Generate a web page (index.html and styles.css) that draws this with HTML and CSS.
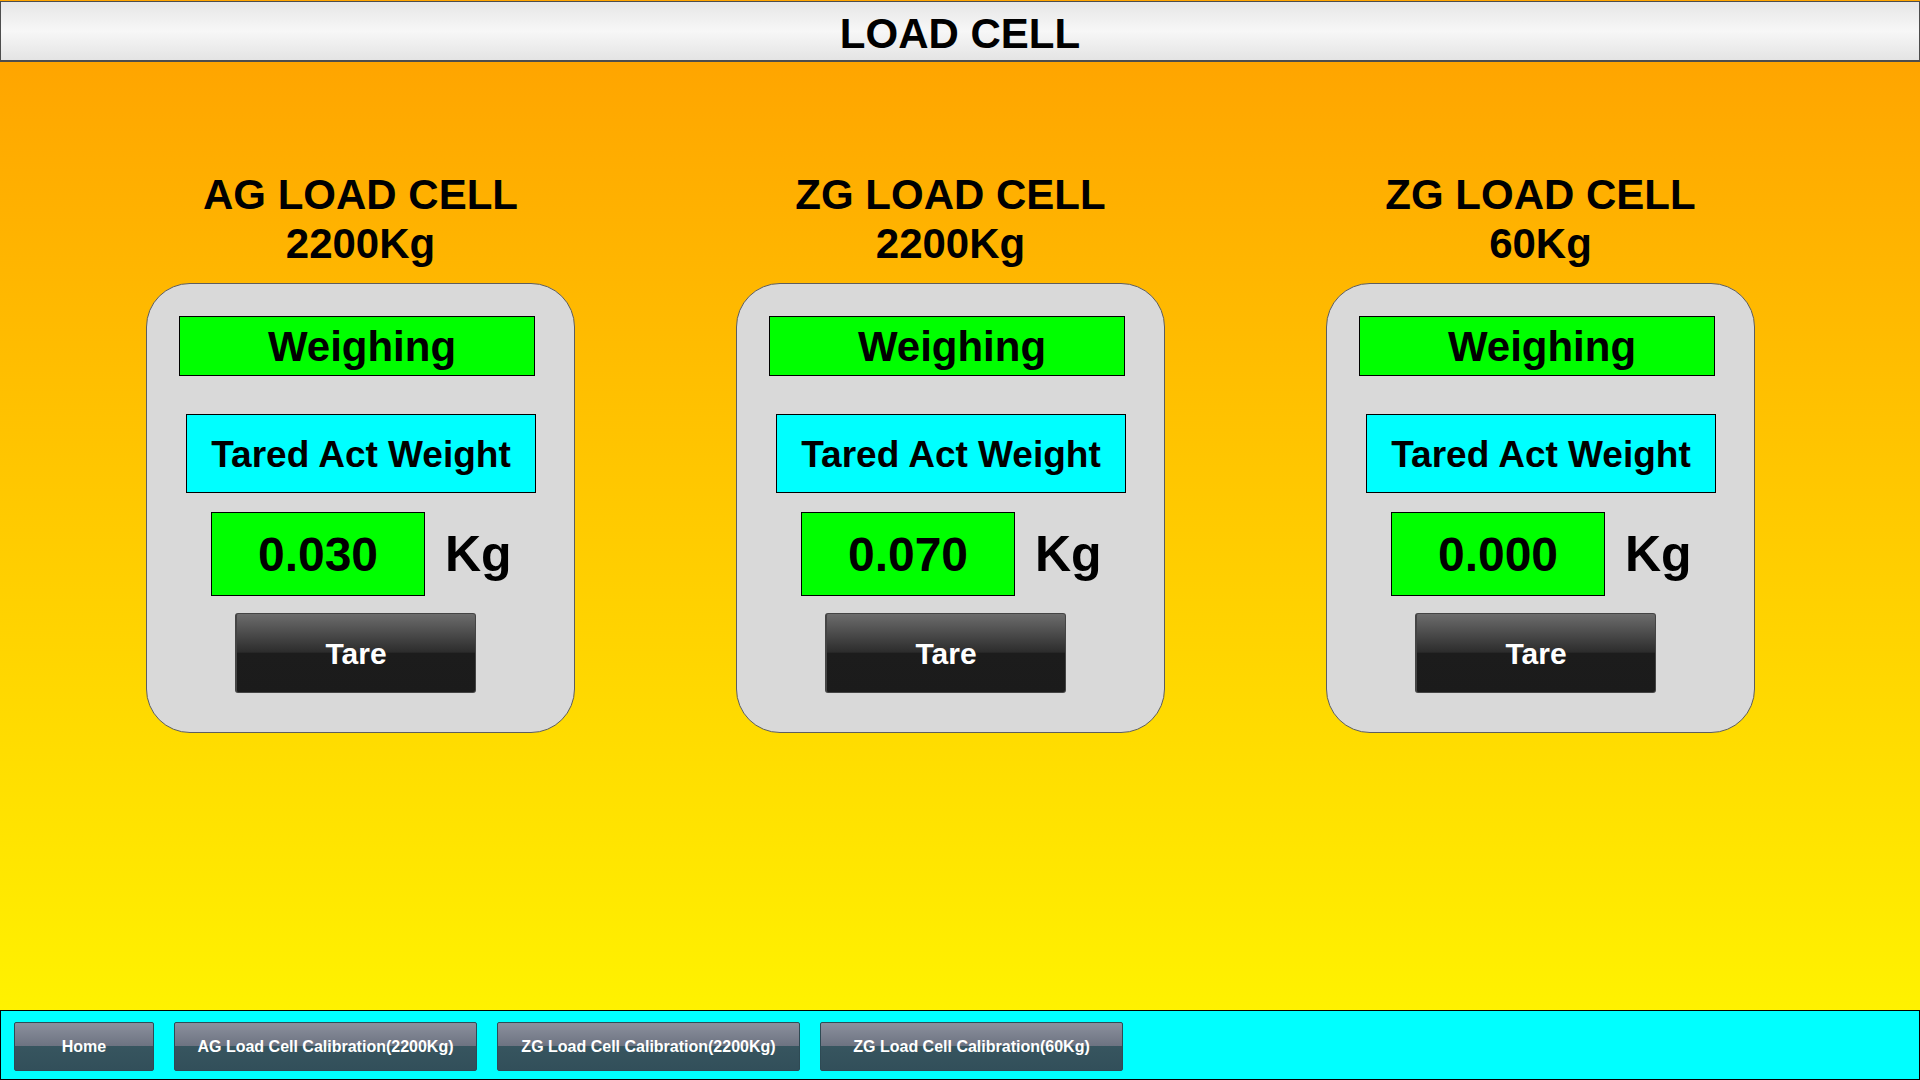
FILE: index.html
```html
<!DOCTYPE html>
<html>
<head>
<meta charset="utf-8">
<title>LOAD CELL</title>
<link rel="stylesheet" href="styles.css">
</head>
<body>
<div class="screen">
  <header class="topbar"><h1 class="topbar-title">LOAD CELL</h1></header>
  <main class="cells">
    <section class="cell">
      <h2 class="cell-title">AG LOAD CELL<br>2200Kg</h2>
      <div class="card">
        <div class="status">Weighing</div>
        <div class="label">Tared Act Weight</div>
        <div class="reading">
          <div class="value">0.030</div>
          <div class="unit">Kg</div>
        </div>
        <button class="tare">Tare</button>
      </div>
    </section>
    <section class="cell">
      <h2 class="cell-title">ZG LOAD CELL<br>2200Kg</h2>
      <div class="card">
        <div class="status">Weighing</div>
        <div class="label">Tared Act Weight</div>
        <div class="reading">
          <div class="value">0.070</div>
          <div class="unit">Kg</div>
        </div>
        <button class="tare">Tare</button>
      </div>
    </section>
    <section class="cell">
      <h2 class="cell-title">ZG LOAD CELL<br>60Kg</h2>
      <div class="card">
        <div class="status">Weighing</div>
        <div class="label">Tared Act Weight</div>
        <div class="reading">
          <div class="value">0.000</div>
          <div class="unit">Kg</div>
        </div>
        <button class="tare">Tare</button>
      </div>
    </section>
  </main>
  <footer class="navbar">
    <button class="nav-btn nav-home">Home</button>
    <button class="nav-btn">AG Load Cell Calibration(2200Kg)</button>
    <button class="nav-btn">ZG Load Cell Calibration(2200Kg)</button>
    <button class="nav-btn">ZG Load Cell Calibration(60Kg)</button>
  </footer>
</div>
</body>
</html>
```

FILE: styles.css
```css
* { box-sizing: border-box; }
html, body { margin: 0; padding: 0; }
body {
  font-family: "Liberation Sans", Arial, sans-serif;
  width: 1920px;
  height: 1080px;
  overflow: hidden;
}
.screen {
  width: 1920px;
  height: 1080px;
  display: flex;
  flex-direction: column;
  background: linear-gradient(to bottom, #ffa500 0px, #ffa500 61px, #fff200 1010px);
}
.topbar {
  margin-top: 1px;
  height: 61px;
  border: 1px solid #4d4d4d;
  border-bottom-width: 2px;
  background: linear-gradient(to bottom, #e6e6e6 0%, #f7f7f7 50%, #e4e4e4 100%);
  display: flex;
  align-items: center;
  justify-content: center;
}
.topbar-title {
  margin: 0;
  font-size: 42px;
  font-weight: bold;
  color: #000;
  line-height: 1;
  padding-top: 6px;
}
.cells {
  flex: 1;
  display: flex;
  gap: 161px;
  padding-left: 146px;
  padding-top: 108px;
}
.cell {
  width: 429px;
  display: flex;
  flex-direction: column;
  align-items: center;
}
.cell-title {
  margin: 0;
  font-size: 42px;
  line-height: 49px;
  font-weight: bold;
  text-align: center;
  color: #000;
}
.card {
  margin-top: 15px;
  width: 429px;
  height: 450px;
  border: 1px solid #5e5e5e;
  border-radius: 44px;
  background: #d9d9d9;
  display: flex;
  flex-direction: column;
  align-items: flex-start;
}
.status {
  margin-top: 32px;
  margin-left: 32px;
  width: 356px;
  height: 60px;
  border: 1px solid #000;
  background: #00ff00;
  display: flex;
  align-items: center;
  justify-content: center;
  padding-left: 10px;
  padding-top: 2px;
  font-size: 42px;
  font-weight: bold;
  color: #000;
}
.label {
  margin-top: 38px;
  margin-left: 39px;
  width: 350px;
  height: 79px;
  border: 1px solid #000;
  background: #00ffff;
  display: flex;
  align-items: center;
  justify-content: center;
  padding-top: 2px;
  font-size: 37px;
  font-weight: bold;
  color: #000;
}
.reading {
  margin-top: 19px;
  margin-left: 64px;
  display: flex;
  align-items: center;
  gap: 20px;
}
.value {
  width: 214px;
  height: 84px;
  border: 1px solid #000;
  background: #00ff00;
  display: flex;
  align-items: center;
  justify-content: center;
  font-size: 48px;
  font-weight: bold;
  color: #000;
}
.unit {
  font-size: 50px;
  line-height: 1;
  font-weight: bold;
  color: #000;
  padding-bottom: 1px;
}
.tare {
  margin-top: 17px;
  margin-left: 88px;
  width: 241px;
  height: 80px;
  border: 1px solid #444;
  border-left-width: 2px;
  border-radius: 3px;
  background: linear-gradient(to bottom, #6c6c6c 0%, #2c2c2c 49%, #1c1c1c 50%, #1b1b1b 100%);
  color: #fff;
  font-family: "Liberation Sans", Arial, sans-serif;
  font-size: 30px;
  font-weight: bold;
  padding: 2px 0 0 0;
  cursor: pointer;
}
.navbar {
  height: 70px;
  border: 1px solid #000;
  background: #00ffff;
  display: flex;
  align-items: flex-start;
  gap: 20px;
  padding-top: 11px;
  padding-left: 13px;
}
.nav-btn {
  width: 303px;
  height: 49px;
  border: 1px solid #2e4a54;
  border-radius: 2px;
  background: linear-gradient(to bottom, #8b909d 0%, #6d7381 49%, #37555f 50%, #324f5a 100%);
  color: #fff;
  font-family: "Liberation Sans", Arial, sans-serif;
  font-size: 16px;
  font-weight: bold;
  padding: 0;
  cursor: pointer;
}
.nav-home { width: 140px; }
```
